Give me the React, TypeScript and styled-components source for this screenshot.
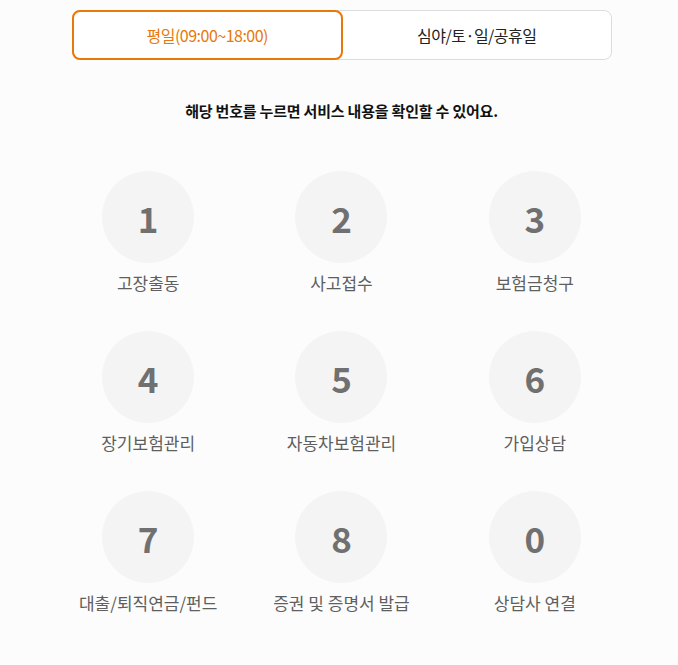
import React, { useState } from 'react';
import styled, { createGlobalStyle } from 'styled-components';

const GlobalStyle = createGlobalStyle`
  body {
    margin: 0;
    background: #fcfcfc;
    font-family: "Noto Sans CJK KR", "Noto Sans", sans-serif;
  }
`;

const Page = styled.div`
  width: 678px;
  box-sizing: border-box;
  padding: 10px 0 0 5px;
  display: flex;
  flex-direction: column;
  align-items: center;
`;

const Tabs = styled.div`
  width: 540px;
  height: 50px;
  display: flex;
  background: #fff;
  border: 1px solid #dcdcdc;
  border-radius: 8px;
  box-sizing: border-box;
`;

const Tab = styled.button<{ $active: boolean }>`
  flex: 1;
  margin: ${(p) => (p.$active ? '-1px 0 -1px -1px' : '0')};
  border: ${(p) => (p.$active ? '2px solid #e8780a' : 'none')};
  border-radius: 8px;
  background: #fff;
  color: ${(p) => (p.$active ? '#e8780a' : '#222')};
  font-family: inherit;
  font-size: 16px;
  letter-spacing: -0.5px;
  cursor: pointer;
  padding: 0;
`;

const Guide = styled.p`
  margin: 40px 0 0;
  font-size: 15px;
  font-weight: 700;
  color: #111;
  letter-spacing: -0.2px;
  line-height: 22px;
`;

const Grid = styled.div`
  width: 580px;
  margin-top: 49px;
  display: grid;
  grid-template-columns: repeat(3, 1fr);
  row-gap: 37px;
`;

const Item = styled.button`
  display: flex;
  flex-direction: column;
  align-items: center;
  gap: 9px;
  border: none;
  background: none;
  padding: 0;
  font-family: inherit;
  cursor: pointer;
`;

const Circle = styled.span`
  width: 92px;
  height: 92px;
  border-radius: 50%;
  background: #f4f4f4;
  display: flex;
  align-items: center;
  justify-content: center;
  font-size: 35px;
  font-weight: 700;
  color: #707070;
`;

const Label = styled.span`
  font-size: 17px;
  line-height: 22px;
  color: #5f5f5f;
  letter-spacing: 0;
`;

const items = [
  ['1', '고장출동'],
  ['2', '사고접수'],
  ['3', '보험금청구'],
  ['4', '장기보험관리'],
  ['5', '자동차보험관리'],
  ['6', '가입상담'],
  ['7', '대출/퇴직연금/펀드'],
  ['8', '증권 및 증명서 발급'],
  ['0', '상담사 연결'],
];

export default function App() {
  const [tab, setTab] = useState(0);
  return (
    <Page>
      <GlobalStyle />
      <Tabs>
        <Tab $active={tab === 0} onClick={() => setTab(0)}>평일(09:00~18:00)</Tab>
        <Tab $active={tab === 1} onClick={() => setTab(1)}>심야/토·일/공휴일</Tab>
      </Tabs>
      <Guide>해당 번호를 누르면 서비스 내용을 확인할 수 있어요.</Guide>
      <Grid>
        {items.map(([num, label]) => (
          <Item key={num}>
            <Circle>{num}</Circle>
            <Label>{label}</Label>
          </Item>
        ))}
      </Grid>
    </Page>
  );
}
